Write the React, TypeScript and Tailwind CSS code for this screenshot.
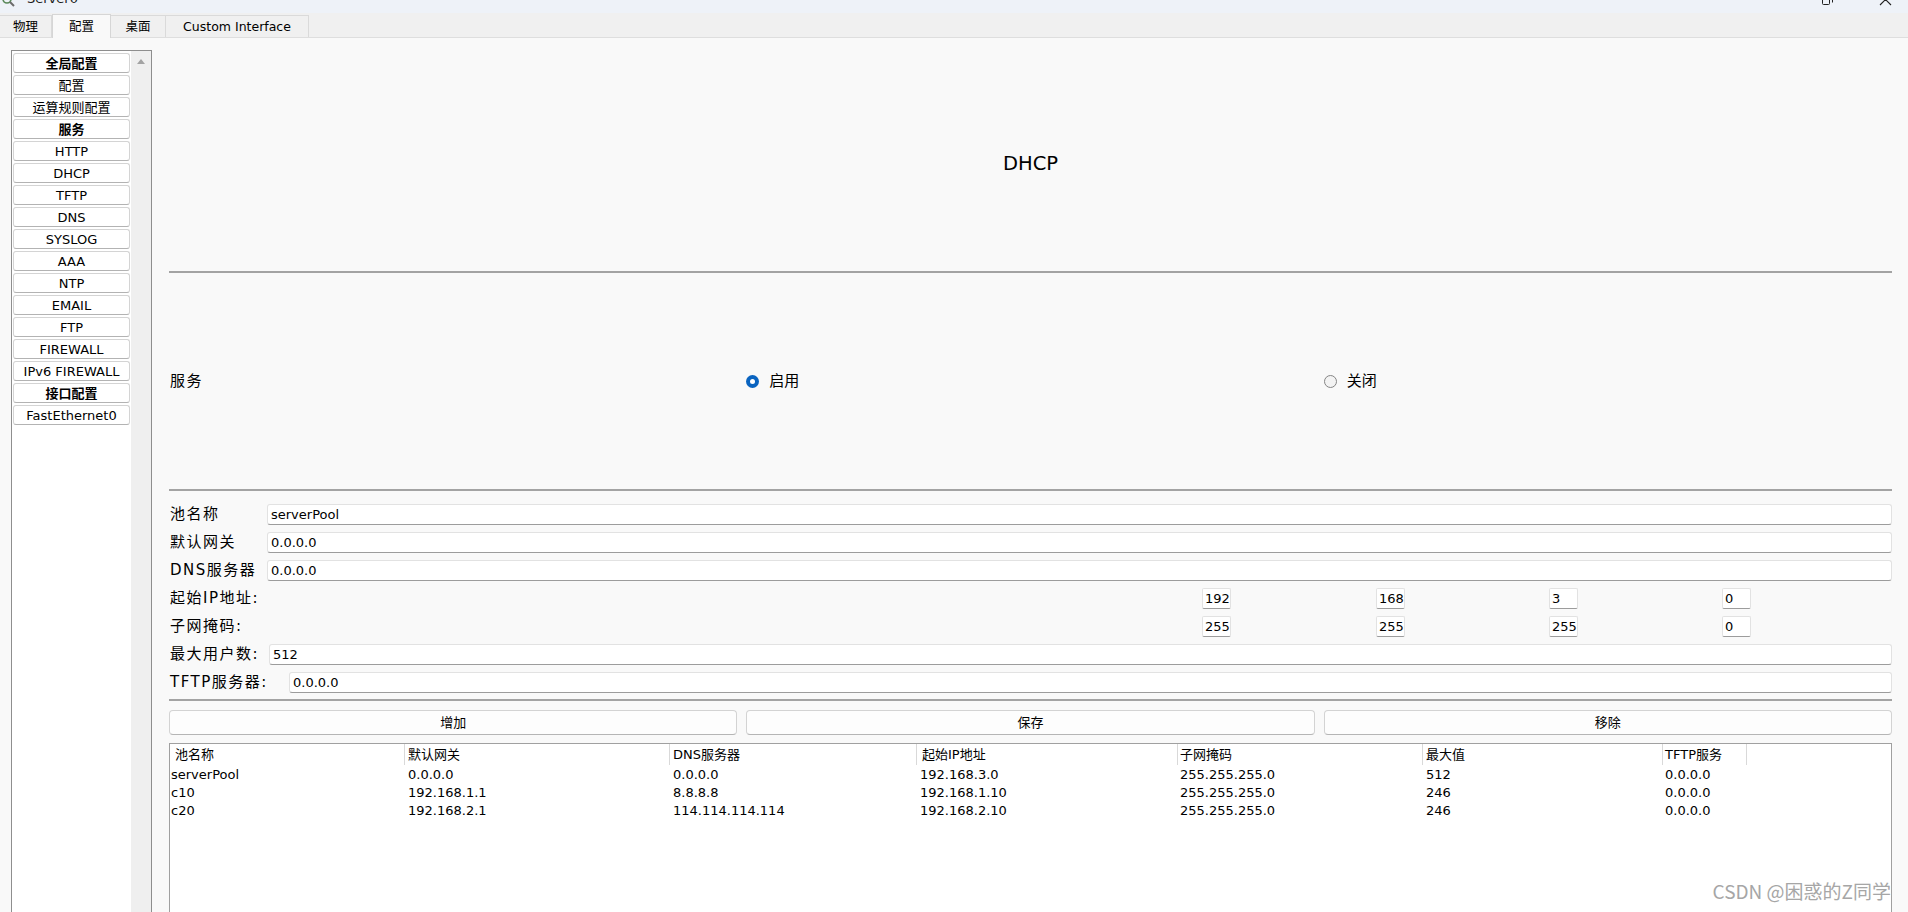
const sideItems: [string, boolean][] = [
  ["全局配置", true],
  ["配置", false],
  ["运算规则配置", false],
  ["服务", true],
  ["HTTP", false],
  ["DHCP", false],
  ["TFTP", false],
  ["DNS", false],
  ["SYSLOG", false],
  ["AAA", false],
  ["NTP", false],
  ["EMAIL", false],
  ["FTP", false],
  ["FIREWALL", false],
  ["IPv6 FIREWALL", false],
  ["接口配置", true],
  ["FastEthernet0", false],
];

const columns = [
  { title: "池名称", w: "w-[235px]", hp: "pl-[5px]", dp: "pl-[1px]" },
  { title: "默认网关", w: "w-[265px]", hp: "pl-[3px]", dp: "pl-[3px]" },
  { title: "DNS服务器", w: "w-[247px]", hp: "pl-[3px]", dp: "pl-[3px]" },
  { title: "起始IP地址", w: "w-[261px]", hp: "pl-[5px]", dp: "pl-[3px]" },
  { title: "子网掩码", w: "w-[245px]", hp: "pl-[2px]", dp: "pl-[2px]" },
  { title: "最大值", w: "w-[240px]", hp: "pl-[3px]", dp: "pl-[3px]" },
  { title: "TFTP服务", w: "w-[84px]", hp: "pl-[2px]", dp: "pl-[2px]" },
];

const pools = [
  ["serverPool", "0.0.0.0", "0.0.0.0", "192.168.3.0", "255.255.255.0", "512", "0.0.0.0"],
  ["c10", "192.168.1.1", "8.8.8.8", "192.168.1.10", "255.255.255.0", "246", "0.0.0.0"],
  ["c20", "192.168.2.1", "114.114.114.114", "192.168.2.10", "255.255.255.0", "246", "0.0.0.0"],
];

const Field = ({ value }: { value: string }) => (
  <div className="flex-1 h-[21px] bg-white border border-[#e2e2e2] border-b-[#9c9c9c] rounded-[3px] pl-[3px] flex items-center text-[13px] leading-none whitespace-nowrap">
    {value}
  </div>
);

const Octet = ({ value }: { value: string }) => (
  <div className="w-[29px] h-[21px] bg-white border border-[#e2e2e2] border-b-[#9c9c9c] rounded-[2px] pl-[2px] flex items-center text-[13px] leading-none">
    {value}
  </div>
);

const Label = ({ text, w }: { text: string; w: string }) => (
  <div className={`${w} shrink-0 text-[15px] tracking-[1.5px] whitespace-nowrap leading-none`}>{text}</div>
);

const Radio = ({ on, text }: { on: boolean; text: string }) => (
  <div className="flex items-center gap-[10px]">
    {on ? (
      <span className="w-[13px] h-[13px] rounded-full bg-[#0a64c0] flex items-center justify-center">
        <span className="w-[5px] h-[5px] rounded-full bg-white" />
      </span>
    ) : (
      <span className="w-[13px] h-[13px] rounded-full border border-[#858585] bg-[#f3f3f3]" />
    )}
    <span className="text-[15px] leading-none">{text}</span>
  </div>
);

const Line = () => <div className="h-[2px] bg-[#a3a3a3] shrink-0" />;

export default function App() {
  return (
    <div className="relative w-[1908px] h-[912px] overflow-hidden bg-[#f9f9f9] text-black flex flex-col font-['DejaVu_Sans','Noto_Sans_CJK_SC',sans-serif]">
      {/* title bar, cut at the top */}
      <div className="h-[13px] shrink-0 bg-[#eef2f8] flex items-start overflow-hidden">
        <svg width="14" height="14" viewBox="0 0 14 14" className="-mt-[7px] ml-[1px]">
          <circle cx="6" cy="6" r="4" fill="none" stroke="#5b8a5b" strokeWidth="1.6" />
          <path d="M9 9 L13 13" stroke="#6b6b6b" strokeWidth="2" />
        </svg>
        <span className="ml-[12px] -mt-[9px] text-[13px] leading-[16px] text-[#1a1a1a]">Server0</span>
        <div className="flex-1" />
        <svg width="11" height="10" viewBox="0 0 11 10" className="-mt-[5px]">
          <rect x="0.5" y="2.5" width="7" height="7" rx="1" fill="none" stroke="#222" />
          <path d="M2.5 0.5 H9 Q10.5 0.5 10.5 2 V7.5" fill="none" stroke="#222" />
        </svg>
        <svg width="13" height="12" viewBox="0 0 13 12" className="ml-[46px] mr-[16px] -mt-[6px]">
          <path d="M1 0 L12 11 M12 0 L1 11" stroke="#222" strokeWidth="1.1" />
        </svg>
      </div>

      {/* tabs */}
      <div className="h-[25px] shrink-0 bg-[#f0f0f0] border-b border-[#dedede] flex items-end text-[12.5px]">
        <div className="w-[52px] h-[22px] pt-px border-t border-r border-[#dadada] flex items-center justify-center">物理</div>
        <div className="w-[59px] h-[24px] -mb-px pt-px bg-[#f9f9f9] border-t border-x border-[#d6d6d6] flex items-center justify-center">配置</div>
        <div className="w-[55px] h-[22px] pt-px border-t border-r border-[#dadada] flex items-center justify-center">桌面</div>
        <div className="w-[143px] h-[22px] pt-px border-t border-r border-[#dadada] flex items-center justify-center">Custom Interface</div>
      </div>

      <div className="flex flex-1 min-h-0">
        {/* sidebar */}
        <div className="w-[152px] shrink-0 pl-[11px] pt-[12px]">
          <div className="w-[141px] h-[880px] border border-[#8e8e8e] bg-white flex">
            <div className="w-[119px] pl-px pt-[2px] flex flex-col gap-[2px]">
              {sideItems.map(([t, bold]) => (
                <div
                  key={t}
                  className={`w-[117px] h-[20px] bg-white border border-[#d4d4d4] border-b-[#b3b3b3] rounded-[3px] flex items-center justify-center text-[13px] leading-none whitespace-nowrap ${bold ? "font-bold" : ""}`}
                >
                  {t}
                </div>
              ))}
            </div>
            <div className="w-[20px] bg-[#efefef] flex justify-center pt-[8px]">
              <svg width="8" height="5" viewBox="0 0 8 5">
                <path d="M0 5 L4 0 L8 5 Z" fill="#a3a3a3" />
              </svg>
            </div>
          </div>
        </div>

        {/* main panel */}
        <div className="flex-1 min-w-0 pl-[17px] pr-[16px] flex flex-col">
          <div className="h-[233px] shrink-0 pt-[18px] flex items-center justify-center text-[19.5px] leading-none">DHCP</div>
          <Line />
          <div className="h-[216px] shrink-0 grid grid-cols-3 gap-x-[9px] items-center">
            <div className="text-[15px] tracking-[1.5px] leading-none pl-px">服务</div>
            <Radio on text="启用" />
            <Radio on={false} text="关闭" />
          </div>
          <Line />

          <div className="pt-[13px] pb-[6px] flex flex-col gap-[7px] shrink-0">
            <div className="flex items-center pl-px">
              <Label text="池名称" w="w-[97px]" />
              <Field value="serverPool" />
            </div>
            <div className="flex items-center pl-px">
              <Label text="默认网关" w="w-[97px]" />
              <Field value="0.0.0.0" />
            </div>
            <div className="flex items-center pl-px">
              <Label text="DNS服务器" w="w-[97px]" />
              <Field value="0.0.0.0" />
            </div>
            <div className="flex items-center h-[21px] pl-px">
              <Label text="起始IP地址:" w="w-[1032px]" />
              <div className="w-[174px]"><Octet value="192" /></div>
              <div className="w-[173px]"><Octet value="168" /></div>
              <div className="w-[173px]"><Octet value="3" /></div>
              <div className="flex-1"><Octet value="0" /></div>
            </div>
            <div className="flex items-center h-[21px] pl-px">
              <Label text="子网掩码:" w="w-[1032px]" />
              <div className="w-[174px]"><Octet value="255" /></div>
              <div className="w-[173px]"><Octet value="255" /></div>
              <div className="w-[173px]"><Octet value="255" /></div>
              <div className="flex-1"><Octet value="0" /></div>
            </div>
            <div className="flex items-center pl-px">
              <Label text="最大用户数:" w="w-[99px]" />
              <Field value="512" />
            </div>
            <div className="flex items-center pl-px">
              <Label text="TFTP服务器:" w="w-[119px]" />
              <Field value="0.0.0.0" />
            </div>
          </div>
          <Line />

          <div className="mt-[9px] h-[25px] shrink-0 grid grid-cols-3 gap-x-[9px] text-[13px]">
            {["增加", "保存", "移除"].map((b) => (
              <div key={b} className="bg-[#fdfdfd] border border-[#d3d3d3] border-b-[#b5b5b5] rounded-[4px] flex items-center justify-center leading-none">
                {b}
              </div>
            ))}
          </div>

          <div className="mt-[8px] h-[300px] shrink-0 border border-[#a0a0a0] bg-white text-[13px]">
            <div className="flex h-[21px]">
              {columns.map((c) => (
                <div key={c.title} className={`${c.w} ${c.hp} h-full border-r border-[#d9d9d9] flex items-center leading-none whitespace-nowrap`}>
                  {c.title}
                </div>
              ))}
            </div>
            {pools.map((row) => (
              <div key={row[0]} className="flex h-[18px]">
                {row.map((v, i) => (
                  <div key={i} className={`${columns[i].w} ${columns[i].dp} flex items-center leading-none whitespace-nowrap`}>
                    {v}
                  </div>
                ))}
              </div>
            ))}
          </div>
        </div>
      </div>

      <div className="absolute right-[17px] bottom-[12px] text-[19px] leading-none text-[#a6a6a6] font-['Noto_Sans_CJK_SC',sans-serif] [text-shadow:0_0_2px_#ffffff]">
        CSDN @困惑的Z同学
      </div>
    </div>
  );
}
